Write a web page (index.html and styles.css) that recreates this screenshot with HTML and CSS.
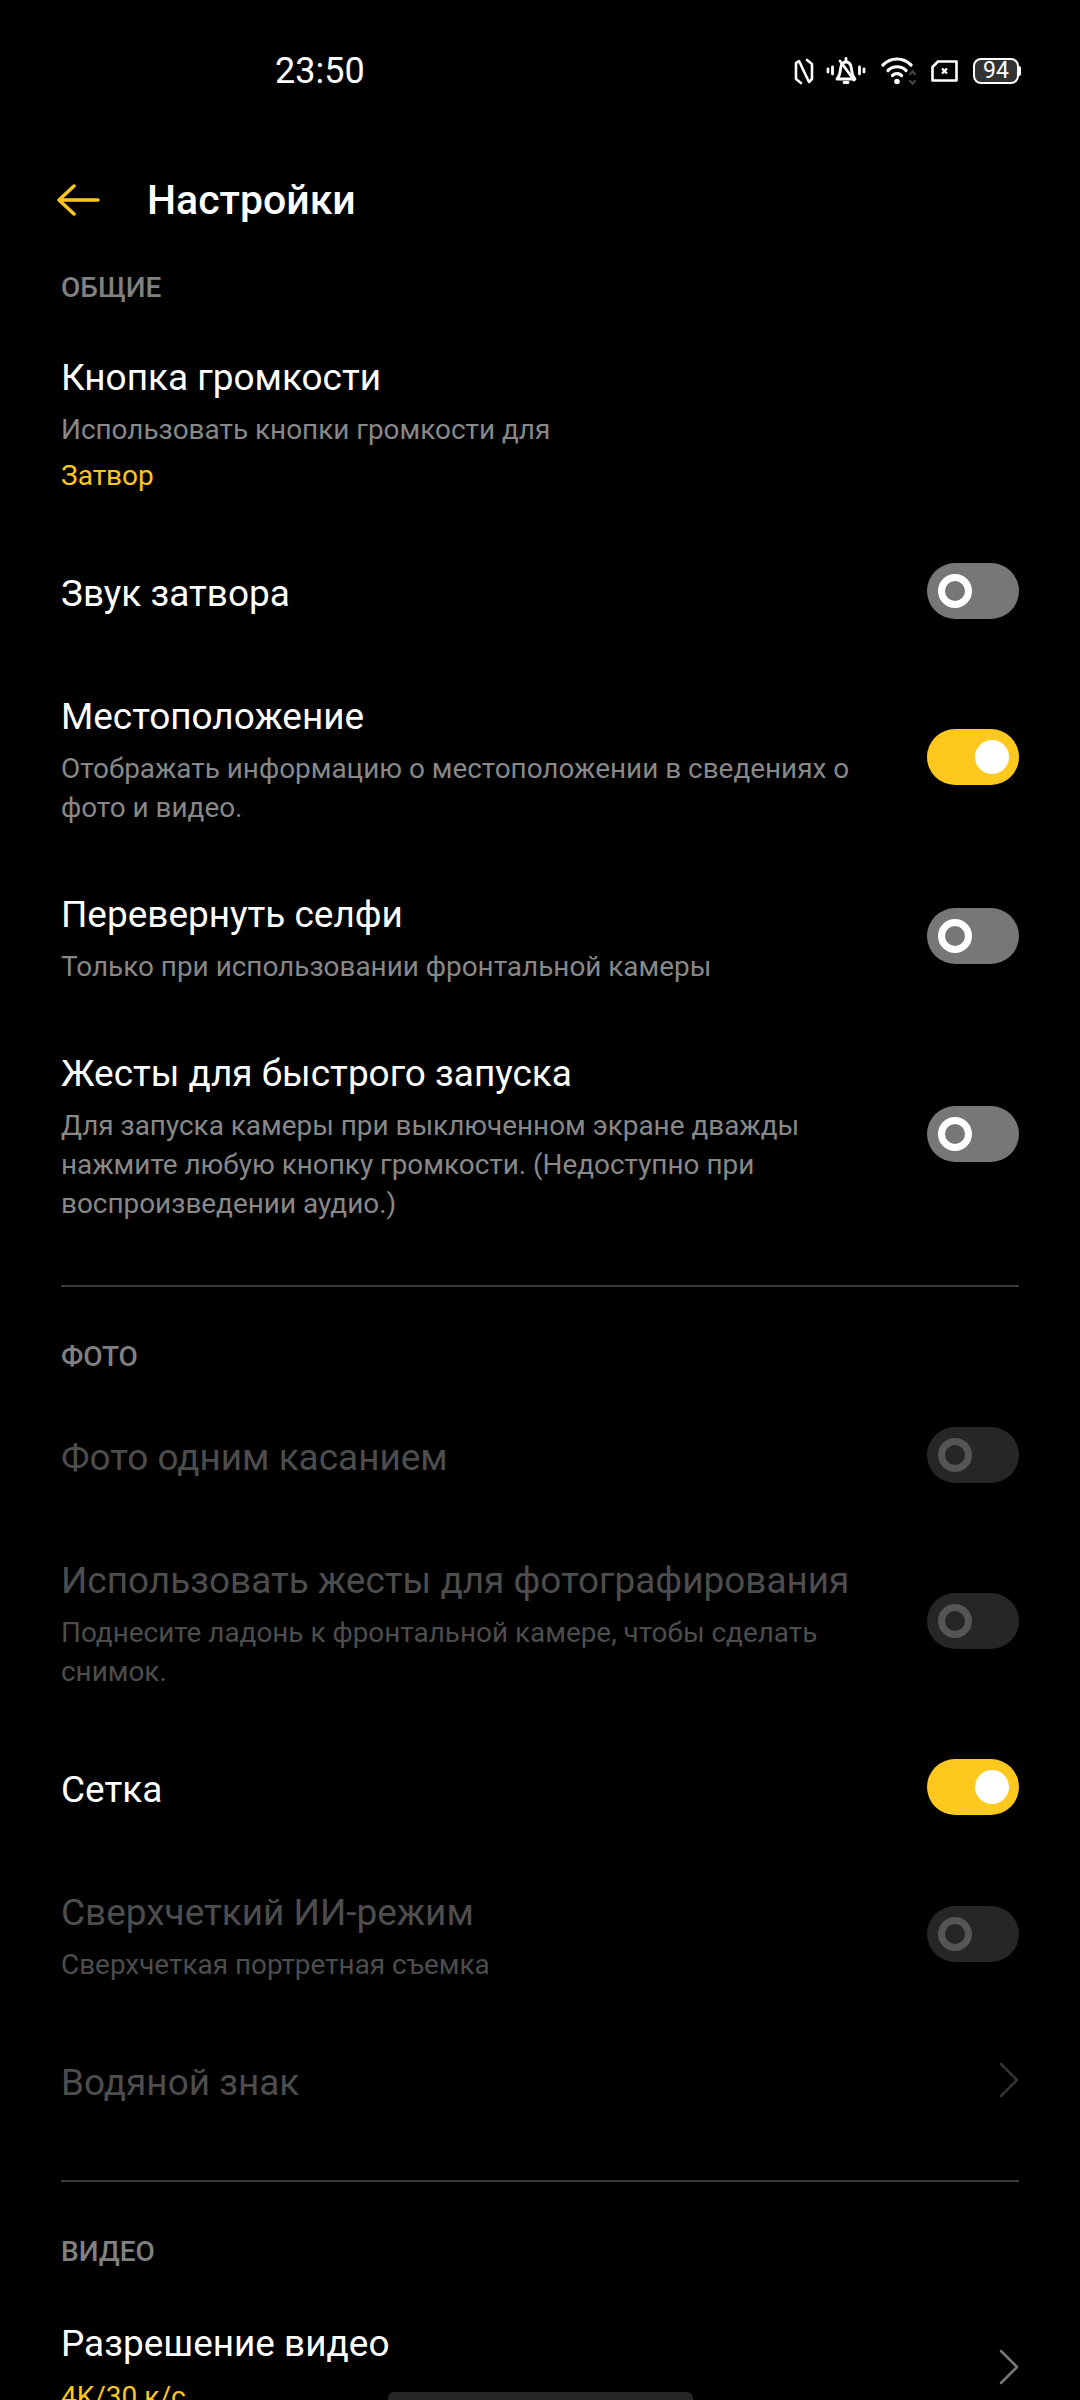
FILE: index.html
```html
<!DOCTYPE html>
<html lang="ru">
<head>
    <meta charset="UTF-8">
    <meta name="viewport" content="width=device-width, initial-scale=1.0">
    <title>Настройки</title>
    <link rel="stylesheet" href="styles.css">
</head>
<body>
    <div class="status-bar">
        <span class="time">23:50</span>
        <div class="status-icons">
            <svg class="icon-nfc" width="20" height="27" viewBox="0 0 20 27" fill="none" stroke="#fff" stroke-width="2.600" stroke-linejoin="round" stroke-linecap="round">
                <path d="M7 25 L2 21 V5 L5 3 L15 24 L18 21 V6 L13 2"/>
            </svg>
            <svg class="icon-bell" width="40" height="28" viewBox="0 0 40 28" fill="none" stroke="#fff" stroke-width="2.800" stroke-linecap="round" stroke-linejoin="round">
                <path d="M2 12 V15 M6.500 10 V17 M33.500 10 V17 M38 12 V15"/>
                <path d="M11 22 C13 20 14 17 14.500 12 C15 7 17 5 20 5 C23 5 25 7 25.500 12 C26 17 27 20 29 22 Z"/>
                <path d="M20 1.500 V4 M18 25.500 H22 M14 4 L28 23"/>
            </svg>
            <svg class="icon-wifi" width="35" height="29" viewBox="0 0 35 29" fill="none" stroke="#fff" stroke-width="3.200" stroke-linecap="round">
                <path d="M2 8 C10 0 22 0 30 8"/>
                <path d="M7 13.500 C12 8.500 20 8.500 25 13.500"/>
                <path d="M11.500 18.500 C14 16 18 16 20.500 18.500"/>
                <circle cx="16" cy="24.500" r="2.800" fill="#fff" stroke="none"/>
                <path d="M29 17 L31.500 14.500 L34 17 M29 24 L31.500 26.500 L34 24" stroke="#444" stroke-width="2.400"/>
            </svg>
            <svg class="icon-card" width="27" height="22" viewBox="0 0 27 22" fill="none" stroke="#fff" stroke-width="2.600" stroke-linejoin="round">
                <path d="M1.500 7 L7 1.500 H25.500 V20.500 H1.500 Z"/>
                <path d="M11 8.500 L16 13.500 M16 8.500 L11 13.500" stroke-width="2.400"/>
            </svg>
            <div class="battery">
                <div class="battery-body">94</div>
                <div class="battery-tip"></div>
            </div>
        </div>
    </div>

    <div class="top-bar">
        <svg class="back" width="44" height="32" viewBox="0 0 44 32" fill="none" stroke="#fdc61f" stroke-width="3.500" stroke-linecap="round" stroke-linejoin="round">
            <path d="M41 16 H3 M17 2 L2 16 L17 30"/>
        </svg>
        <h1 class="page-title">Настройки</h1>
    </div>

    <section class="group">
        <h2 class="group-title">ОБЩИЕ</h2>
        <div class="row">
            <div class="row-text">
                <div class="row-title">Кнопка громкости</div>
                <div class="row-sub">Использовать кнопки громкости для</div>
                <div class="row-value">Затвор</div>
            </div>
        </div>
        <div class="row single">
            <div class="row-text"><div class="row-title">Звук затвора</div></div>
            <span class="switch"></span>
        </div>
        <div class="row">
            <div class="row-text">
                <div class="row-title">Местоположение</div>
                <div class="row-sub">Отображать информацию о местоположении в сведениях о фото и видео.</div>
            </div>
            <span class="switch on"></span>
        </div>
        <div class="row">
            <div class="row-text">
                <div class="row-title">Перевернуть селфи</div>
                <div class="row-sub">Только при использовании фронтальной камеры</div>
            </div>
            <span class="switch"></span>
        </div>
        <div class="row">
            <div class="row-text">
                <div class="row-title">Жесты для быстрого запуска</div>
                <div class="row-sub">Для запуска камеры при выключенном экране дважды нажмите любую кнопку громкости. (Недоступно при воспроизведении аудио.)</div>
            </div>
            <span class="switch"></span>
        </div>
    </section>

    <hr class="divider">

    <section class="group after-divider">
        <h2 class="group-title">ФОТО</h2>
        <div class="row single disabled">
            <div class="row-text"><div class="row-title">Фото одним касанием</div></div>
            <span class="switch"></span>
        </div>
        <div class="row disabled">
            <div class="row-text">
                <div class="row-title">Использовать жесты для фотографирования</div>
                <div class="row-sub">Поднесите ладонь к фронтальной камере, чтобы сделать снимок.</div>
            </div>
            <span class="switch"></span>
        </div>
        <div class="row single">
            <div class="row-text"><div class="row-title">Сетка</div></div>
            <span class="switch on"></span>
        </div>
        <div class="row disabled">
            <div class="row-text">
                <div class="row-title">Сверхчеткий ИИ-режим</div>
                <div class="row-sub">Сверхчеткая портретная съемка</div>
            </div>
            <span class="switch"></span>
        </div>
        <div class="row single disabled">
            <div class="row-text"><div class="row-title">Водяной знак</div></div>
            <svg class="chevron" width="20" height="36" viewBox="0 0 20 36" fill="none" stroke="currentColor" stroke-width="2.500" stroke-linecap="round" stroke-linejoin="round">
                <path d="M2 2 L18 18 L2 34"/>
            </svg>
        </div>
    </section>

    <hr class="divider">

    <section class="group after-divider">
        <h2 class="group-title">ВИДЕО</h2>
        <div class="row video">
            <div class="row-text">
                <div class="row-title">Разрешение видео</div>
                <div class="row-value first">4K/30 к/с</div>
            </div>
            <svg class="chevron" width="20" height="36" viewBox="0 0 20 36" fill="none" stroke="currentColor" stroke-width="2.500" stroke-linecap="round" stroke-linejoin="round">
                <path d="M2 2 L18 18 L2 34"/>
            </svg>
        </div>
    </section>

    <div class="home-bar"></div>
</body>
</html>
```

FILE: styles.css
```css
html, body {
    height: 2400px;
    overflow: hidden;
}
body {
    margin: 0;
    background-color: #000;
    color: #fff;
    font-family: Roboto, "Noto Sans", sans-serif;
    position: relative;
}
.status-bar {
    height: 142px;
    display: flex;
    align-items: center;
    padding: 0 59px 0 275px;
    box-sizing: border-box;
    justify-content: space-between;
}
.time {
    font-size: 36px;
    line-height: 142px;
}
.status-icons {
    display: flex;
    align-items: center;
    gap: 15px;
}
.icon-nfc {
    margin-right: -3px;
}
.battery {
    display: flex;
    align-items: center;
}
.battery-body {
    width: 46px;
    height: 26px;
    box-sizing: border-box;
    border: 2.5px solid #fff;
    border-radius: 8px;
    background-color: #333;
    font-size: 23px;
    line-height: 21px;
    text-align: center;
}
.battery-tip {
    width: 2px;
    height: 10px;
    background-color: #fff;
    border-radius: 0 2px 2px 0;
}
.top-bar {
    height: 116px;
    display: flex;
    align-items: center;
    padding-left: 57px;
}
.back {
    margin-right: 46px;
}
.page-title {
    margin: 0;
    font-size: 41px;
    font-weight: 500;
}
.group {
    padding: 13px 61px 0;
}
.group.after-divider {
    padding-top: 53px;
}
.group-title {
    margin: 0 0 16px;
    font-size: 28px;
    font-weight: 500;
    line-height: 34px;
    color: #808080;
}
.row {
    display: flex;
    align-items: center;
    justify-content: space-between;
    padding: 31px 0;
}
.row.single {
    min-height: 134px;
    padding: 0;
}
.row.video {
    padding-top: 33px;
}
.row-text {
    width: 810px;
}
.row-title {
    font-size: 36.95px;
    line-height: 50px;
    padding-top: 1px;
}
.row-sub {
    margin-top: 7px;
    font-size: 27.9px;
    line-height: 39px;
    color: #888;
}
.row-value {
    margin-top: 7px;
    font-size: 28px;
    line-height: 39px;
    color: #fdc61f;
}
.row-value.first {
    margin-top: 8px;
}
.switch {
    width: 92px;
    height: 56px;
    margin-bottom: 4px;
    border-radius: 28px;
    background-color: #777;
    position: relative;
    flex-shrink: 0;
}
.switch::after {
    content: "";
    position: absolute;
    left: 11px;
    top: 11px;
    width: 34px;
    height: 34px;
    box-sizing: border-box;
    border: 7px solid #fff;
    border-radius: 50%;
}
.switch.on {
    background-color: #ffc81e;
}
.switch.on::after {
    left: 48px;
    background-color: #fff;
}
.disabled .row-title {
    color: #4d4d4d;
}
.disabled .row-sub {
    color: #4d4d4d;
}
.disabled .switch {
    background-color: #262626;
}
.disabled .switch::after {
    border-color: #555;
}
.chevron {
    color: #777;
    flex-shrink: 0;
}
.disabled .chevron {
    color: #333;
    margin-bottom: 4px;
}
.divider {
    margin: 31px 61px 0;
    height: 2px;
    border: none;
    background-color: #3a3a3a;
}
.home-bar {
    position: absolute;
    left: 388px;
    bottom: 0;
    width: 305px;
    height: 8px;
    border-radius: 6px 6px 0 0;
    background-color: #262626;
}
```
